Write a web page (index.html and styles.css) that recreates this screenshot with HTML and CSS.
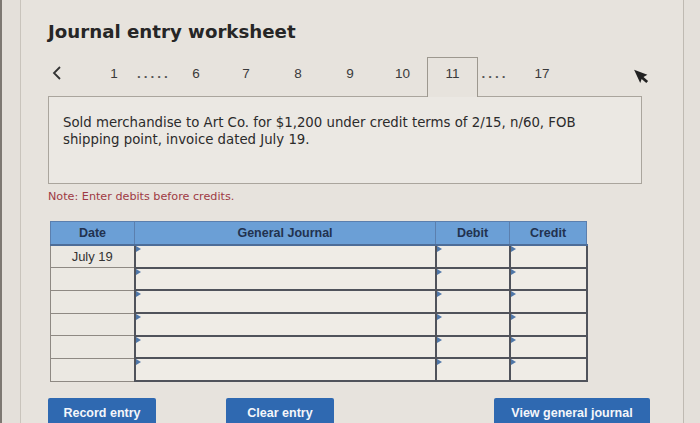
FILE: index.html
```html
<!DOCTYPE html>
<html>
<head>
<meta charset="utf-8">
<link rel="stylesheet" href="styles.css">
</head>
<body>
<div class="frame">
  <div class="panel">
    <h1 class="title">Journal entry worksheet</h1>
    <div class="nav">
      <span class="nav-item chev">
        <svg width="10" height="16" viewBox="0 0 10 16"><path d="M8 2 L2 8 L8 14" fill="none" stroke="#333" stroke-width="1.8"/></svg>
      </span>
      <span class="nav-item w40 first">1</span>
      <span class="nav-item w40 dots">.....</span>
      <span class="nav-item w44">6</span>
      <span class="nav-item w56">7</span>
      <span class="nav-item w48">8</span>
      <span class="nav-item w56">9</span>
      <span class="nav-item w49">10</span>
      <span class="nav-item tab">11</span>
      <span class="nav-item w34 dots">....</span>
      <span class="nav-item w60">17</span>
      <span class="cursor">
        <svg width="16" height="22" viewBox="0 0 16 22"><path d="M3 2 L13 12 L8.5 12.5 L11 18 L8.5 19 L6 13.5 L3 16.5 Z" fill="#222" transform="rotate(-25 8 10)"/></svg>
      </span>
    </div>
    <div class="question">
      Sold merchandise to Art Co. for $1,200 under credit terms of 2/15, n/60, FOB shipping point, invoice dated July 19.
    </div>
    <p class="note">Note: Enter debits before credits.</p>
    <table class="journal">
      <colgroup>
        <col class="c-date"><col class="c-gj"><col class="c-dr"><col class="c-cr">
      </colgroup>
      <thead>
        <tr><th>Date</th><th>General Journal</th><th>Debit</th><th>Credit</th></tr>
      </thead>
      <tbody>
        <tr><td class="date">July 19</td><td class="in"><span class="tri"></span></td><td class="in"><span class="tri"></span></td><td class="in"><span class="tri"></span></td></tr>
        <tr><td class="date"></td><td class="in"><span class="tri"></span></td><td class="in"><span class="tri"></span></td><td class="in"><span class="tri"></span></td></tr>
        <tr><td class="date"></td><td class="in"><span class="tri"></span></td><td class="in"><span class="tri"></span></td><td class="in"><span class="tri"></span></td></tr>
        <tr><td class="date"></td><td class="in"><span class="tri"></span></td><td class="in"><span class="tri"></span></td><td class="in"><span class="tri"></span></td></tr>
        <tr><td class="date"></td><td class="in"><span class="tri"></span></td><td class="in"><span class="tri"></span></td><td class="in"><span class="tri"></span></td></tr>
        <tr><td class="date"></td><td class="in"><span class="tri"></span></td><td class="in"><span class="tri"></span></td><td class="in"><span class="tri"></span></td></tr>
      </tbody>
    </table>
    <div class="buttons">
      <button class="btn b-record">Record entry</button>
      <button class="btn b-clear">Clear entry</button>
      <button class="btn b-view">View general journal</button>
    </div>
  </div>
</div>
</body>
</html>
```
FILE: styles.css
```css
html, body {
  margin: 0;
  padding: 0;
  height: 100%;
  overflow: hidden;
}
body {
  background: #e4e0da;
  border-left: 2px solid #7d7872;
  font-family: "Liberation Sans", Arial, sans-serif;
  color: #333;
}
.frame {
  margin-left: 18px;
  width: 662px;
  height: 423px;
  border-left: 1px solid #c9c4bc;
  border-right: 1px solid #bfbab2;
  background: #e7e3dd;
}
.panel {
  padding-left: 27px;
  padding-top: 19px;
}
.title {
  margin: 0;
  font-family: "DejaVu Sans", Verdana, sans-serif;
  font-weight: bold;
  font-size: 18.2px;
  line-height: 26px;
  color: #262626;
}
.nav {
  display: flex;
  align-items: stretch;
  margin-top: 12px;
  height: 40px;
  position: relative;
  z-index: 2;
  margin-bottom: -1px;
  width: 620px;
}
.nav-item {
  display: flex;
  align-items: flex-start;
  justify-content: center;
  font-size: 13.5px;
  line-height: 16px;
  color: #3a3a3a;
  padding-top: 9px;
}
.chev { width: 18px; justify-content: flex-start; padding-left: 4px; padding-top: 8px; }
.first { margin-left: 24px; }
.w34 { width: 34px; }
.w40 { width: 40px; }
.w44 { width: 44px; }
.w48 { width: 48px; }
.w49 { width: 49px; }
.w56 { width: 56px; }
.w60 { width: 60px; }
.dots { letter-spacing: 3px; font-weight: bold; color: #555; }
.tab {
  width: 49px;
  border: 1px solid #9d988f;
  border-bottom: none;
  background: #e7e3dd;
  padding-top: 8px;
}
.cursor {
  margin-left: auto;
  display: flex;
  align-items: center;
  margin-right: 18px;
  padding-bottom: 2px;
}
.question {
  width: 564px;
  height: 69px;
  border: 1px solid #aaa59d;
  background: #ebe8e3;
  padding: 17px 14px 0 14px;
  font-family: "DejaVu Sans", Verdana, sans-serif;
  font-size: 13.3px;
  line-height: 17px;
  color: #2b2b2b;
}
.note {
  margin: 6px 0 0 0;
  font-family: "DejaVu Sans", Verdana, sans-serif;
  font-size: 11.2px;
  line-height: 14px;
  color: #9e3a44;
}
.journal {
  margin-top: 17px;
  margin-left: 2px;
  border-collapse: collapse;
  width: 536px;
  table-layout: fixed;
}
.c-date { width: 84px; }
.c-gj { width: 301px; }
.c-dr { width: 74px; }
.c-cr { width: 77px; }
.journal th {
  background: #6b9fd6;
  color: #22324f;
  font-size: 12.5px;
  font-weight: bold;
  height: 22px;
  padding: 0;
  border: 1px solid #5b7fae;
  border-bottom: 2px solid #4d6d98;
}
.journal td {
  height: 20.7px;
  padding: 0;
}
.journal td.date {
  border: 1px solid #8e8983;
  background: #ebe8e2;
  text-align: center;
  font-size: 13px;
  color: #333;
}
.journal td.in {
  border: 2px solid #50535b;
  background: #efece6;
  position: relative;
}
.tri {
  position: absolute;
  left: 0;
  top: 0;
  width: 0;
  height: 0;
  border-top: 3px solid transparent;
  border-bottom: 3px solid transparent;
  border-left: 5px solid #4f77a8;
}
.buttons {
  display: flex;
  margin-top: 16px;
}
.btn {
  height: 32px;
  border: none;
  border-radius: 2px 2px 0 0;
  background: #2f69b1;
  color: #f4f6fa;
  font-family: "Liberation Sans", Arial, sans-serif;
  font-weight: bold;
  font-size: 12.5px;
  padding: 0;
  padding-bottom: 2px;
}
.b-record { width: 108px; }
.b-clear { width: 108px; margin-left: 70px; }
.b-view { width: 156px; margin-left: 160px; }
```
